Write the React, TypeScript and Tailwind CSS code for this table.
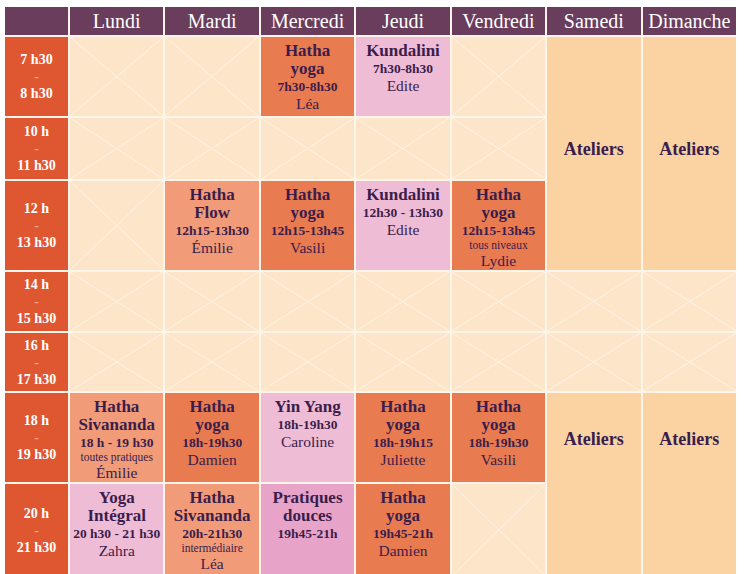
type Course = {
  title: string[];
  time: string;
  note?: string;
  name?: string;
  color: string;
};

const ORANGE = "bg-[#e97b51]";
const SALMON = "bg-[#f19b78]";
const PINK = "bg-[#efbcd6]";
const ROSE = "bg-[#e8a3c8]";

const days = ["Lundi", "Mardi", "Mercredi", "Jeudi", "Vendredi", "Samedi", "Dimanche"];

// null = empty slot, "ateliers" = merged weekend block (only on the row where it starts)
type Slot = Course | null | "ateliers" | "skip";

const rows: { from: string; to: string; slots: Slot[] }[] = [
  {
    from: "7 h30",
    to: "8 h30",
    slots: [
      null,
      null,
      { title: ["Hatha", "yoga"], time: "7h30-8h30", name: "Léa", color: ORANGE },
      { title: ["Kundalini"], time: "7h30-8h30", name: "Edite", color: PINK },
      null,
      "ateliers",
      "ateliers",
    ],
  },
  { from: "10 h", to: "11 h30", slots: [null, null, null, null, null, "skip", "skip"] },
  {
    from: "12 h",
    to: "13 h30",
    slots: [
      null,
      { title: ["Hatha", "Flow"], time: "12h15-13h30", name: "Émilie", color: SALMON },
      { title: ["Hatha", "yoga"], time: "12h15-13h45", name: "Vasili", color: ORANGE },
      { title: ["Kundalini"], time: "12h30 - 13h30", name: "Edite", color: PINK },
      { title: ["Hatha", "yoga"], time: "12h15-13h45", note: "tous niveaux", name: "Lydie", color: ORANGE },
      "skip",
      "skip",
    ],
  },
  { from: "14 h", to: "15 h30", slots: [null, null, null, null, null, null, null] },
  { from: "16 h", to: "17 h30", slots: [null, null, null, null, null, null, null] },
  {
    from: "18 h",
    to: "19 h30",
    slots: [
      { title: ["Hatha", "Sivananda"], time: "18 h - 19 h30", note: "toutes pratiques", name: "Émilie", color: SALMON },
      { title: ["Hatha", "yoga"], time: "18h-19h30", name: "Damien", color: ORANGE },
      { title: ["Yin Yang"], time: "18h-19h30", name: "Caroline", color: PINK },
      { title: ["Hatha", "yoga"], time: "18h-19h15", name: "Juliette", color: ORANGE },
      { title: ["Hatha", "yoga"], time: "18h-19h30", name: "Vasili", color: ORANGE },
      "ateliers",
      "ateliers",
    ],
  },
  {
    from: "20 h",
    to: "21 h30",
    slots: [
      { title: ["Yoga", "Intégral"], time: "20 h30 - 21 h30", name: "Zahra", color: PINK },
      { title: ["Hatha", "Sivananda"], time: "20h-21h30", note: "intermédiaire", name: "Léa", color: SALMON },
      { title: ["Pratiques", "douces"], time: "19h45-21h", color: ROSE },
      { title: ["Hatha", "yoga"], time: "19h45-21h", name: "Damien", color: ORANGE },
      null,
      "skip",
      "skip",
    ],
  },
];

const EmptyCell = () => (
  <div className="relative bg-[#fce5c8]">
    <svg className="absolute inset-0 h-full w-full" viewBox="0 0 100 100" preserveAspectRatio="none">
      <line x1="0" y1="0" x2="100" y2="100" stroke="#fef3e6" strokeWidth="1" vectorEffect="non-scaling-stroke" />
      <line x1="100" y1="0" x2="0" y2="100" stroke="#fef3e6" strokeWidth="1" vectorEffect="non-scaling-stroke" />
    </svg>
  </div>
);

const CourseCell = ({ course }: { course: Course }) => (
  <div className={`${course.color} flex flex-col items-center pt-[5px] text-center text-[#3b1d4b]`}>
    {course.title.map((t) => (
      <span key={t} className="text-[17px] font-bold leading-[18px]">
        {t}
      </span>
    ))}
    <span className="text-[13.5px] font-bold leading-[17px]">{course.time}</span>
    {course.note && <span className="text-[11.5px] leading-[13px]">{course.note}</span>}
    {course.name && <span className="text-[15.5px] leading-[17px]">{course.name}</span>}
  </div>
);

const AteliersCell = ({ first }: { first: boolean }) => (
  <div
    className={`flex justify-center bg-[#fbd3a2] text-[18px] font-bold text-[#3b1d4b] ${
      first ? "row-span-3 pt-[99px]" : "row-span-2 pt-[33px]"
    }`}
  >
    Ateliers
  </div>
);

export default function App() {
  return (
    <div className="h-[574px] overflow-hidden bg-white pl-[5px] pt-[7px] font-['Liberation_Serif',serif]">
      <div className="grid w-[731px] grid-cols-[63px_repeat(7,minmax(0,1fr))] grid-rows-[28px_79px_61px_89px_59px_58px_89px_92px] gap-[2px] bg-[#fef5ea]">
        <div className="bg-[#6a3d5d]" />
        {days.map((d) => (
          <div key={d} className="flex items-center justify-center bg-[#6a3d5d] text-[20px] leading-none text-white">
            {d}
          </div>
        ))}
        {rows.map((row, ri) => (
          <>
            <div
              key={`t${ri}`}
              className="flex flex-col items-center justify-center bg-[#df5731] text-[14px] font-bold leading-[17px] text-white"
            >
              <span>{row.from}</span>
              <span className="text-[#f4a582]">-</span>
              <span>{row.to}</span>
            </div>
            {row.slots.map((slot, si) => {
              if (slot === "skip") return null;
              if (slot === "ateliers") return <AteliersCell key={`${ri}-${si}`} first={ri === 0} />;
              if (slot === null) return <EmptyCell key={`${ri}-${si}`} />;
              return <CourseCell key={`${ri}-${si}`} course={slot} />;
            })}
          </>
        ))}
      </div>
    </div>
  );
}
